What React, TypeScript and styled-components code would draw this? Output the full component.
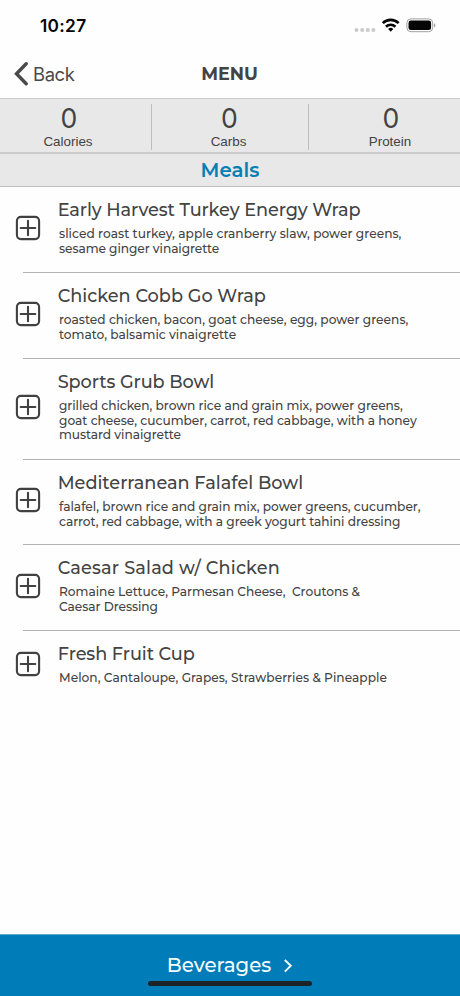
import React from "react";
import styled, { createGlobalStyle } from "styled-components";

const GlobalStyle = createGlobalStyle`
  * { box-sizing: border-box; }
  body { margin: 0; background: #fefefe; }
`;

const Screen = styled.div`
  display: flex;
  flex-direction: column;
  height: 996px;
  width: 460px;
  overflow: hidden;
  background: #fefefe;
  color: #434343;
  font-family: Montserrat, Inter, sans-serif;
`;

const StatusBar = styled.div`
  display: flex;
  align-items: center;
  justify-content: space-between;
  height: 50px;
  padding: 2px 24px 0 40px;
  flex: none;
`;

const Clock = styled.span`
  font: 600 17.3px/22px Inter, sans-serif;
  letter-spacing: 0.3px;
  color: #050505;
`;

const NavBar = styled.header`
  display: grid;
  grid-template-columns: 1fr auto 1fr;
  align-items: center;
  height: 49px;
  padding: 0 14px;
  border-bottom: 1px solid #cacaca;
  flex: none;
`;

const BackButton = styled.button`
  display: flex;
  align-items: center;
  gap: 4px;
  padding: 0;
  border: 0;
  background: none;
  color: #4a4a4a;
  font: 400 18.4px/24px Inter, sans-serif;
  letter-spacing: -0.4px;
`;

const NavTitle = styled.h1`
  margin: 0;
  font-size: 17.6px;
  font-weight: 700;
  line-height: 22px;
  padding-right: 1px;
`;

const Totals = styled.section`
  display: grid;
  grid-template-columns: 152px 157px 151px;
  height: 55px;
  padding: 5px 0 6px;
  background: #e8e8e8;
  border-bottom: 2px solid #cbcbcb;
  flex: none;
`;

const Total = styled.div<{ $shift: number }>`
  display: flex;
  flex-direction: column;
  align-items: center;
  padding-left: ${(p) => Math.max(p.$shift, 0)}px;
  padding-right: ${(p) => Math.max(-p.$shift, 0)}px;
  &:not(:last-child) { border-right: 1px solid #bdbdbd; }
`;

const TotalValue = styled.span`
  font: 400 26.6px/28px Inter, sans-serif;
  padding-left: 2px;
`;

const TotalLabel = styled.span`
  font: 400 13.4px/16px "Liberation Sans", sans-serif;
  margin-top: 2px;
`;

const SectionTitle = styled.h2`
  display: flex;
  align-items: center;
  justify-content: center;
  height: 33px;
  margin: 0;
  background: #e8e8e8;
  border-bottom: 1px solid #bdbdbd;
  color: #087fb4;
  font-size: 19.8px;
  font-weight: 600;
  flex: none;
`;

const MealList = styled.ul`
  flex: 1;
  margin: 0;
  padding: 0;
  list-style: none;
`;

const MealRow = styled.li<{ $height: number }>`
  display: flex;
  height: ${(p) => p.$height}px;
  padding-left: 15px;
`;

const AddButton = styled.button`
  display: flex;
  align-items: center;
  width: 26px;
  padding: 0 0 3px;
  border: 0;
  background: none;
  color: #414141;
`;

const MealText = styled.div`
  flex: 1;
  padding: 12.4px 0 0 16.7px;
`;

const MealName = styled.h3<{ $tracking: number }>`
  margin: 0 0 6px;
  font-size: 17.7px;
  font-weight: 500;
  line-height: 22px;
  letter-spacing: ${(p) => p.$tracking}px;
  white-space: pre;
`;

const MealLine = styled.div<{ $tracking: number }>`
  padding-left: 1.3px;
  font-size: 12.2px;
  font-weight: 500;
  line-height: 14.8px;
  letter-spacing: ${(p) => p.$tracking}px;
  white-space: pre;
`;

const Divider = styled.li`
  height: 1px;
  margin-left: 23px;
  background: #b2b2b2;
`;

const Footer = styled.footer`
  display: flex;
  flex-direction: column;
  align-items: center;
  height: 62px;
  background: #007db8;
  border-top: 1px solid #5eabd0;
  flex: none;
`;

const NextButton = styled.button`
  display: flex;
  align-items: center;
  gap: 12px;
  height: 26px;
  margin-top: 17px;
  padding: 0;
  border: 0;
  background: none;
  color: #f4fcff;
  font: 500 19.8px/26px Montserrat, Inter, sans-serif;
`;

const HomeIndicator = styled.div`
  width: 164px;
  height: 5px;
  margin-top: 3px;
  border-radius: 3px;
  background: #1c2427;
`;

interface Line {
  text: string;
  tracking: number;
}

interface Meal {
  name: Line;
  lines: Line[];
  height: number;
}

const line = (text: string, tracking = 0): Line => ({ text, tracking });

const meals: Meal[] = [
  {
    name: line("Early Harvest Turkey Energy Wrap", -0.07),
    lines: [
      line("sliced roast turkey, apple cranberry slaw, power greens,", 0.04),
      line("sesame ginger vinaigrette", -0.07),
    ],
    height: 85,
  },
  {
    name: line("Chicken Cobb Go Wrap"),
    lines: [
      line("roasted chicken, bacon, goat cheese, egg, power greens,", 0.02),
      line("tomato, balsamic vinaigrette"),
    ],
    height: 84.5,
  },
  {
    name: line("Sports Grub Bowl", -0.07),
    lines: [
      line("grilled chicken, brown rice and grain mix, power greens,", -0.03),
      line("goat cheese, cucumber, carrot, red cabbage, with a honey", -0.01),
      line("mustard vinaigrette", -0.05),
    ],
    height: 100,
  },
  {
    name: line("Mediterranean Falafel Bowl"),
    lines: [
      line("falafel, brown rice and grain mix, power greens, cucumber,"),
      line("carrot, red cabbage, with a greek yogurt tahini dressing", -0.04),
    ],
    height: 84.5,
  },
  {
    name: line("Caesar Salad w/ Chicken", 0.16),
    lines: [
      line("Romaine Lettuce, Parmesan Cheese,  Croutons &", -0.01),
      line("Caesar Dressing", -0.05),
    ],
    height: 84.5,
  },
  {
    name: line("Fresh Fruit Cup", -0.08),
    lines: [line("Melon, Cantaloupe, Grapes, Strawberries & Pineapple", 0.03)],
    height: 70,
  },
];

const totals = [
  { label: "Calories", shift: -15 },
  { label: "Carbs", shift: -3 },
  { label: "Protein", shift: 11 },
];

const StatusIcons = () => (
  <svg width="84" height="20" viewBox="352 16 84 20">
    <g fill="#c9c9c9">
      <circle cx="356.5" cy="30" r="2" />
      <circle cx="362.2" cy="30" r="2" />
      <circle cx="367.8" cy="30" r="2" />
      <circle cx="373.4" cy="30" r="2" />
    </g>
    <g fill="none" stroke="#050505" strokeWidth="2.7">
      <path d="M382.8 23.1a11.2 11.2 0 0 1 15.8 0" />
      <path d="M386 26.7a6.7 6.7 0 0 1 9.4 0" />
    </g>
    <path d="M390.7 31.7l-2.6-2.7a3.7 3.7 0 0 1 5.2 0z" fill="#050505" />
    <rect x="406.9" y="18.9" width="25.8" height="12.8" rx="4" fill="none" stroke="#a0a0a0" />
    <rect x="408.5" y="20.5" width="22.6" height="9.6" rx="2.4" fill="#050505" />
    <path d="M434 23.2v4.2a2.3 2.3 0 0 0 0-4.2z" fill="#a0a0a0" />
  </svg>
);

const BackChevron = () => (
  <svg width="15" height="24" viewBox="0 0 15 24">
    <path d="M12.2 1.8L2.5 11.8L12.2 21.8" fill="none" stroke="#4a4a4a" strokeWidth="3.4" strokeLinecap="round" />
  </svg>
);

const PlusBox = () => (
  <svg width="26" height="26" viewBox="0 0 26 26" fill="none" stroke="currentColor">
    <rect x="1.9" y="1.9" width="22.2" height="22.2" rx="4" strokeWidth="2.1" />
    <path d="M13 5.7v14.6M5.7 13h14.6" strokeWidth="2.1" strokeLinecap="round" />
  </svg>
);

const NextChevron = () => (
  <svg width="10" height="16" viewBox="0 0 10 16">
    <path d="M1.8 3L7.8 8.8L1.8 14.6" fill="none" stroke="#f4fcff" strokeWidth="1.9" />
  </svg>
);

export default function App() {
  return (
    <>
      <GlobalStyle />
      <Screen>
        <StatusBar>
          <Clock>10:27</Clock>
          <StatusIcons />
        </StatusBar>
        <NavBar>
          <BackButton>
            <BackChevron />
            Back
          </BackButton>
          <NavTitle>MENU</NavTitle>
        </NavBar>
        <Totals>
          {totals.map((t) => (
            <Total key={t.label} $shift={t.shift}>
              <TotalValue>0</TotalValue>
              <TotalLabel>{t.label}</TotalLabel>
            </Total>
          ))}
        </Totals>
        <SectionTitle>Meals</SectionTitle>
        <MealList>
          {meals.map((meal, i) => (
            <React.Fragment key={meal.name.text}>
              {i > 0 && <Divider />}
              <MealRow $height={meal.height}>
                <AddButton aria-label="Add">
                  <PlusBox />
                </AddButton>
                <MealText>
                  <MealName $tracking={meal.name.tracking}>{meal.name.text}</MealName>
                  {meal.lines.map((l) => (
                    <MealLine key={l.text} $tracking={l.tracking}>
                      {l.text}
                    </MealLine>
                  ))}
                </MealText>
              </MealRow>
            </React.Fragment>
          ))}
        </MealList>
        <Footer>
          <NextButton>
            Beverages
            <NextChevron />
          </NextButton>
          <HomeIndicator />
        </Footer>
      </Screen>
    </>
  );
}
